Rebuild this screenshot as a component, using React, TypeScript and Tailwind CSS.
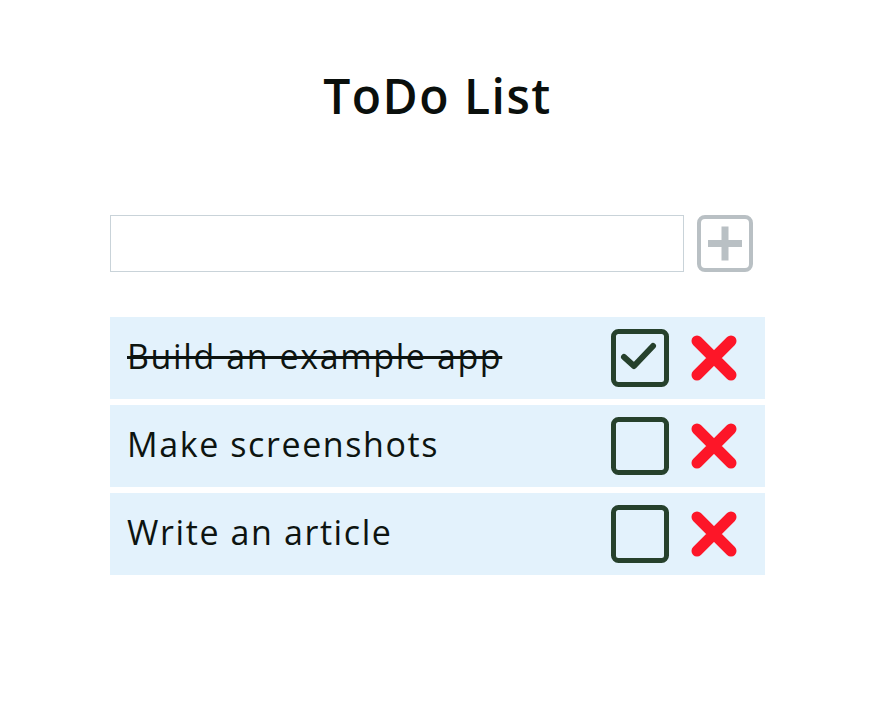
import { useState } from "react";

type Todo = { id: number; text: string; done: boolean };

const initialTodos: Todo[] = [
  { id: 1, text: "Build an example app", done: true },
  { id: 2, text: "Make screenshots", done: false },
  { id: 3, text: "Write an article", done: false },
];

const CheckBox = ({ checked }: { checked: boolean }) => (
  <svg width="58" height="58" viewBox="0 0 58 58">
    <rect x="2.5" y="2.5" width="53" height="53" rx="5" fill="none" stroke="#26412c" strokeWidth="5" />
    {checked && (
      <path d="M13 28 L23 37 L42 17" fill="none" stroke="#26412c" strokeWidth="6" strokeLinecap="round" strokeLinejoin="round" />
    )}
  </svg>
);

const Cross = () => (
  <svg width="48" height="48" viewBox="0 0 48 48">
    <path d="M7 7 L41 41 M41 7 L7 41" stroke="#fd1628" strokeWidth="11" strokeLinecap="round" />
  </svg>
);

export default function App() {
  const [todos, setTodos] = useState<Todo[]>(initialTodos);
  const [input, setInput] = useState("");

  const addTodo = () => {
    if (!input.trim()) return;
    setTodos([...todos, { id: Date.now(), text: input, done: false }]);
    setInput("");
  };

  const toggle = (id: number) =>
    setTodos(todos.map((t) => (t.id === id ? { ...t, done: !t.done } : t)));

  const remove = (id: number) => setTodos(todos.filter((t) => t.id !== id));

  return (
    <div className="min-h-[716px] bg-white font-['Open_Sans',sans-serif] text-black">
      <div className="ml-[110px] w-[655px] pt-[66px]">
        <h1 className="text-center text-[48px] font-semibold leading-[60px] tracking-[1.5px] text-[#0a0f0c]">ToDo List</h1>

        <div className="mt-[89px] flex items-center">
          <input
            value={input}
            onChange={(e) => setInput(e.target.value)}
            className="h-[57px] w-[574px] border border-[#c9d3d9] px-3 text-[30px] outline-none"
          />
          <button onClick={addTodo} className="ml-[13px] flex h-[57px] w-[56px] items-center justify-center">
            <svg width="56" height="57" viewBox="0 0 56 57">
              <rect x="2" y="2" width="52" height="53" rx="6" fill="none" stroke="#b9c0c4" strokeWidth="4" />
              <path d="M28 11.5 V45.5 M11 28.5 H45" stroke="#b9c0c4" strokeWidth="7" />
            </svg>
          </button>
        </div>

        <ul className="mt-[45px] flex flex-col gap-[6px]">
          {todos.map((t) => (
            <li key={t.id} className="flex h-[82px] items-center bg-[#e3f2fc] pl-[17px] pr-[27px]">
              <span
                className={`flex-1 pb-[4px] text-[34px] tracking-[1.6px] text-[#0d1410] ${
                  t.done ? "line-through decoration-[3px]" : ""
                }`}
              >
                {t.text}
              </span>
              <button onClick={() => toggle(t.id)} className="flex">
                <CheckBox checked={t.done} />
              </button>
              <button onClick={() => remove(t.id)} className="ml-[21px] flex">
                <Cross />
              </button>
            </li>
          ))}
        </ul>
      </div>
    </div>
  );
}
